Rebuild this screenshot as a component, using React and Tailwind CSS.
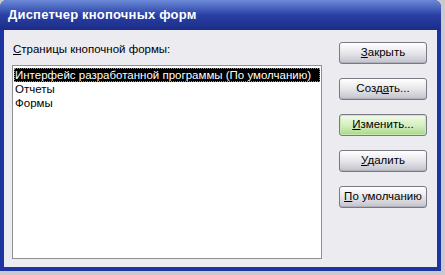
import React from "react";

const buttons = [
  { pre: "", key: "З", post: "акрыть" },
  { pre: "Созд", key: "а", post: "ть..." },
  { pre: "", key: "И", post: "зменить...", hover: true },
  { pre: "", key: "У", post: "далить" },
  { pre: "", key: "П", post: "о умолчанию" },
];

const items = ["Интерфейс разработанной программы (По умолчанию)", "Отчеты", "Формы"];

function XpButton({ b }) {
  return (
    <button
      className={`h-[22px] w-[88px] rounded-[3px] border border-[#7a7a86] text-[11.5px] text-black leading-none ${
        b.hover
          ? "bg-gradient-to-b from-[#f2fbe9] via-[#d6efc2] to-[#a9d88c] shadow-[inset_0_0_0_1px_#c7e9a9]"
          : "bg-gradient-to-b from-[#ffffff] via-[#e6e6ea] to-[#c2c2cc] shadow-[inset_0_-1px_0_#b0b0ba]"
      }`}
    >
      {b.pre}
      <span className="underline">{b.key}</span>
      {b.post}
    </button>
  );
}

export default function App() {
  return (
    <div className="w-[445px] h-[275px] bg-[#c9c9cf] font-['Liberation_Sans',Arial,sans-serif]">
      <div className="w-[441px] h-[271px] flex flex-col rounded-t-[7px] overflow-hidden bg-[#1d35a0]">
        <div className="h-[30px] shrink-0 flex items-center pl-[8px] bg-gradient-to-b from-[#6d8ad8] via-[#2a40a6] to-[#1b2c86]">
          <span className="text-white font-bold text-[13px] tracking-[0.2px]">Диспетчер кнопочных форм</span>
        </div>
        <div className="flex-1 mx-[4px] mb-[4px] bg-[#ecebf0] flex">
          <div className="w-[318px] pl-[8px] pt-[12px] flex flex-col">
            <div className="text-[11.5px] text-black leading-[14px] ml-[1px]">
              <span className="underline">С</span>траницы кнопочной формы:
            </div>
            <div className="mt-[9px] h-[194px] border border-[#8f8f96] bg-white pt-[2px] pl-[1px] pr-[1px]">
              {items.map((t, i) => (
                <div
                  key={t}
                  className={`h-[14px] pl-[1px] text-[11.5px] leading-[14px] whitespace-nowrap ${
                    i === 0 ? "bg-black text-white outline outline-1 outline-dotted outline-offset-[-1px] outline-[#888]" : "text-black"
                  }`}
                >
                  {t}
                </div>
              ))}
            </div>
          </div>
          <div className="pl-[17px] pt-[12px] flex flex-col gap-[14px]">
            {buttons.map((b, i) => (
              <XpButton key={i} b={b} />
            ))}
          </div>
        </div>
      </div>
    </div>
  );
}
